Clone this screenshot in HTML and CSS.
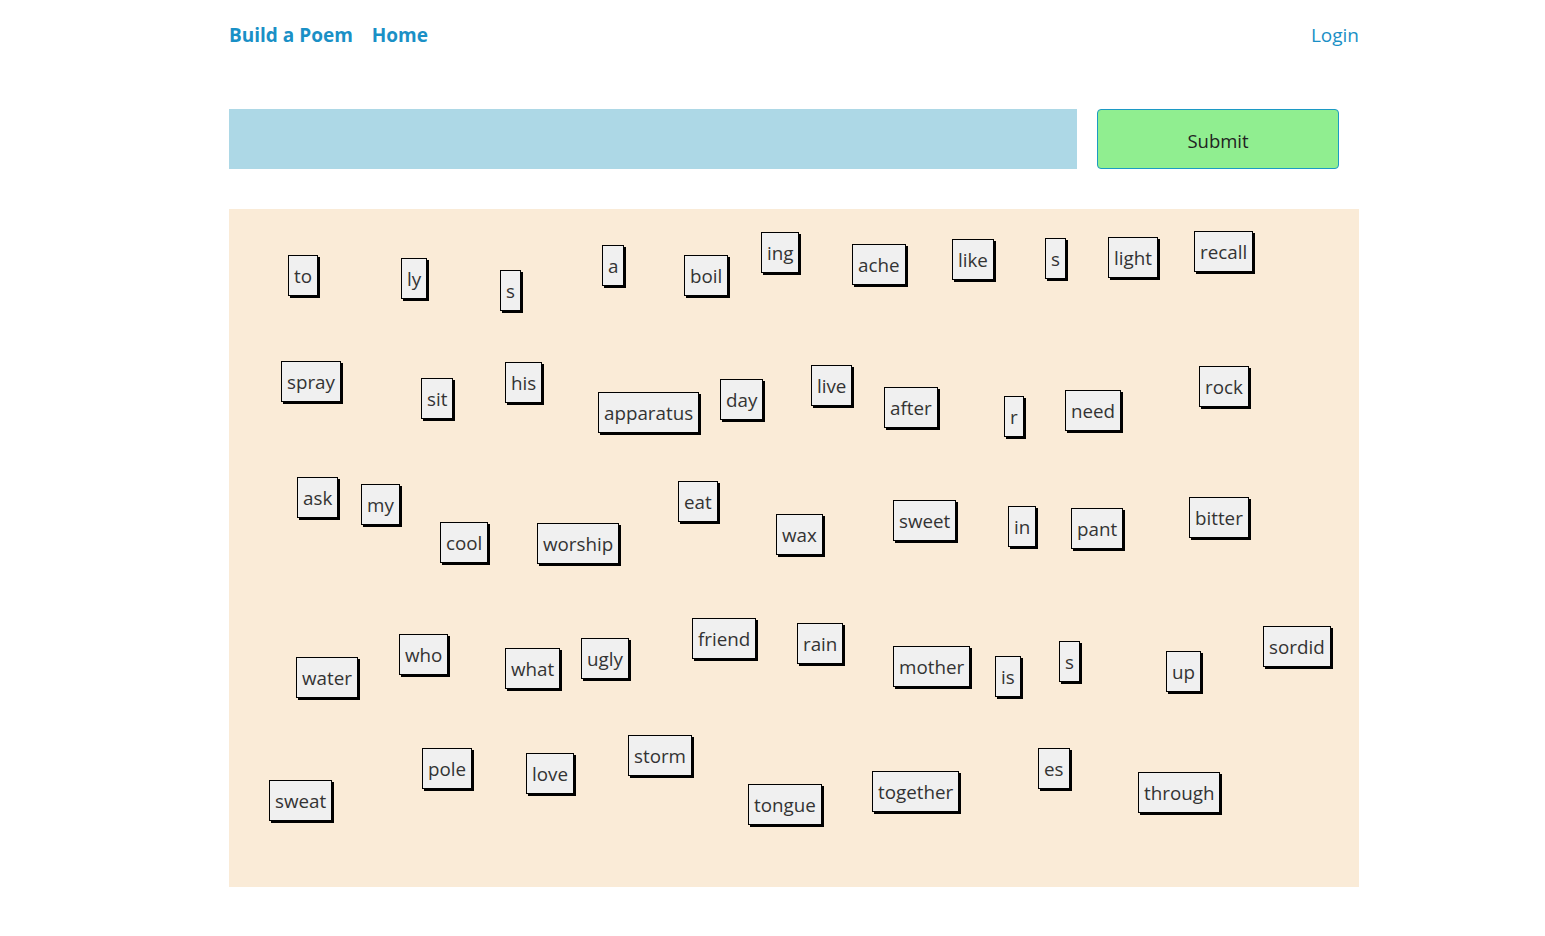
FILE: index.html
```html
<!DOCTYPE html>
<html lang="en">
<head>
<meta charset="utf-8">
<title>Build a Poem</title>
<link rel="stylesheet" href="styles.css">
</head>
<body>
<div class="page">
  <nav class="nav">
    <div class="nav-left">
      <a class="brand" href="#">Build a Poem</a>
      <a class="nav-link" href="#">Home</a>
    </div>
    <a class="login" href="#">Login</a>
  </nav>
  <form class="poem-form">
    <input class="poem-input" type="text">
    <button class="submit" type="button">Submit</button>
  </form>
  <div class="board">
    <span class="tile" style="left:59px;top:46px">to</span>
    <span class="tile" style="left:172px;top:49px">ly</span>
    <span class="tile" style="left:271px;top:61px">s</span>
    <span class="tile" style="left:373px;top:36px">a</span>
    <span class="tile" style="left:455px;top:46px">boil</span>
    <span class="tile" style="left:532px;top:23px">ing</span>
    <span class="tile" style="left:623px;top:35px">ache</span>
    <span class="tile" style="left:723px;top:30px">like</span>
    <span class="tile" style="left:816px;top:29px">s</span>
    <span class="tile" style="left:879px;top:28px">light</span>
    <span class="tile" style="left:965px;top:22px">recall</span>
    <span class="tile" style="left:52px;top:152px">spray</span>
    <span class="tile" style="left:192px;top:169px">sit</span>
    <span class="tile" style="left:276px;top:153px">his</span>
    <span class="tile" style="left:369px;top:183px">apparatus</span>
    <span class="tile" style="left:491px;top:170px">day</span>
    <span class="tile" style="left:582px;top:156px">live</span>
    <span class="tile" style="left:655px;top:178px">after</span>
    <span class="tile" style="left:775px;top:187px">r</span>
    <span class="tile" style="left:836px;top:181px">need</span>
    <span class="tile" style="left:970px;top:157px">rock</span>
    <span class="tile" style="left:68px;top:268px">ask</span>
    <span class="tile" style="left:132px;top:275px">my</span>
    <span class="tile" style="left:211px;top:313px">cool</span>
    <span class="tile" style="left:308px;top:314px">worship</span>
    <span class="tile" style="left:449px;top:272px">eat</span>
    <span class="tile" style="left:547px;top:305px">wax</span>
    <span class="tile" style="left:664px;top:291px">sweet</span>
    <span class="tile" style="left:779px;top:297px">in</span>
    <span class="tile" style="left:842px;top:299px">pant</span>
    <span class="tile" style="left:960px;top:288px">bitter</span>
    <span class="tile" style="left:67px;top:448px">water</span>
    <span class="tile" style="left:170px;top:425px">who</span>
    <span class="tile" style="left:276px;top:439px">what</span>
    <span class="tile" style="left:352px;top:429px">ugly</span>
    <span class="tile" style="left:463px;top:409px">friend</span>
    <span class="tile" style="left:568px;top:414px">rain</span>
    <span class="tile" style="left:664px;top:437px">mother</span>
    <span class="tile" style="left:766px;top:447px">is</span>
    <span class="tile" style="left:830px;top:432px">s</span>
    <span class="tile" style="left:937px;top:442px">up</span>
    <span class="tile" style="left:1034px;top:417px">sordid</span>
    <span class="tile" style="left:40px;top:571px">sweat</span>
    <span class="tile" style="left:193px;top:539px">pole</span>
    <span class="tile" style="left:297px;top:544px">love</span>
    <span class="tile" style="left:399px;top:526px">storm</span>
    <span class="tile" style="left:519px;top:575px">tongue</span>
    <span class="tile" style="left:643px;top:562px">together</span>
    <span class="tile" style="left:809px;top:539px">es</span>
    <span class="tile" style="left:909px;top:563px">through</span>
  </div>
</div>
</body>
</html>
```

FILE: styles.css
```css
html, body {
  margin: 0;
  padding: 0;
  background: #ffffff;
}

body {
  font-family: "Open Sans", "Noto Sans", sans-serif;
  color: #222;
}

.page {
  width: 1130px;
  margin-left: 229px;
}

.nav {
  height: 70px;
  display: flex;
  align-items: center;
  justify-content: space-between;
}

.nav-left {
  display: flex;
  align-items: center;
  gap: 19px;
}

.nav a {
  text-decoration: none;
  color: #1a90c6;
  font-size: 19px;
}

.brand,
.nav-link {
  font-weight: 700;
}

.login {
  font-weight: 400;
  color: #2b9bd3;
}

.poem-form {
  margin-top: 39px;
  display: flex;
  gap: 20px;
  height: 60px;
}

.poem-input {
  width: 848px;
  height: 60px;
  box-sizing: border-box;
  border: none;
  background: #add8e6;
  margin: 0;
  padding: 0 10px;
  font-family: inherit;
  font-size: 18px;
}

.submit {
  width: 242px;
  height: 60px;
  box-sizing: border-box;
  border: 1px solid #1c9ac4;
  border-radius: 4px;
  background: #90ee90;
  color: #222;
  font-family: inherit;
  font-size: 18.5px;
  margin: 0;
  padding: 2px 0 0;
}

.board {
  position: relative;
  margin-top: 40px;
  height: 678px;
  background: #faebd7;
}

.tile {
  position: absolute;
  display: block;
  background: #f0f0f0;
  border: 1px solid #000;
  box-shadow: 2px 2px 0 #000;
  padding: 7px 5px 5px;
  font-size: 18.8px;
  line-height: 27px;
  color: #333;
  white-space: nowrap;
}
```
